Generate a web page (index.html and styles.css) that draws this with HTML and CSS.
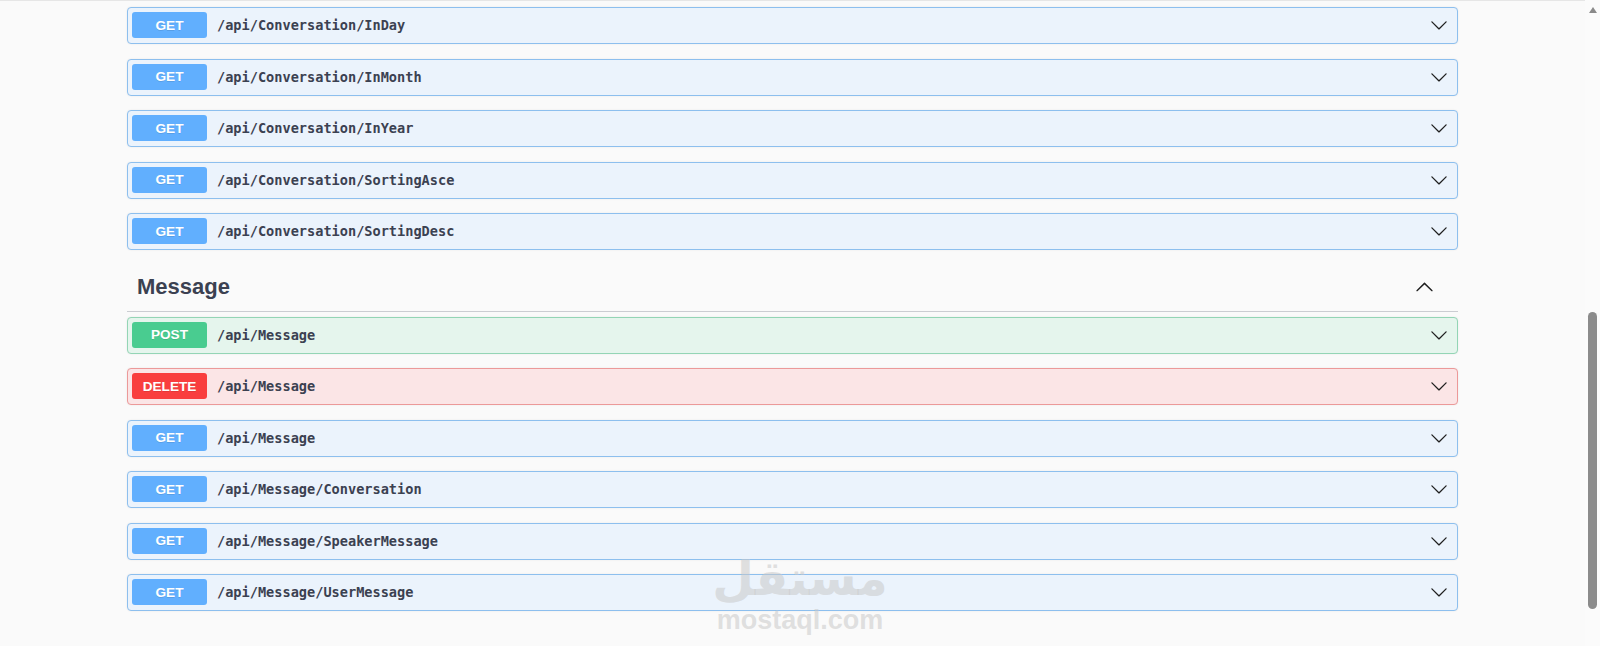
FILE: index.html
```html
<!DOCTYPE html>
<html lang="en">
<head>
    <meta charset="UTF-8">
    <meta name="viewport" content="width=device-width, initial-scale=1.0">
    <title>Swagger UI</title>
    <link rel="stylesheet" href="styles.css">
</head>
<body>
    <main class="page">
        <section class="tag-section">
            <div class="opblock get">
                <span class="method">GET</span>
                <span class="path">/api/Conversation/InDay</span>
                <svg class="arrow" viewBox="0 0 20 20"><path d="M17.418 6.109c.272-.268.709-.268.979 0s.271.701 0 .969l-7.908 7.83c-.27.268-.707.268-.979 0l-7.908-7.83c-.27-.268-.27-.701 0-.969.271-.268.709-.268.979 0L10 13.25l7.418-7.141z"/></svg>
            </div>
            <div class="opblock get">
                <span class="method">GET</span>
                <span class="path">/api/Conversation/InMonth</span>
                <svg class="arrow" viewBox="0 0 20 20"><path d="M17.418 6.109c.272-.268.709-.268.979 0s.271.701 0 .969l-7.908 7.83c-.27.268-.707.268-.979 0l-7.908-7.83c-.27-.268-.27-.701 0-.969.271-.268.709-.268.979 0L10 13.25l7.418-7.141z"/></svg>
            </div>
            <div class="opblock get">
                <span class="method">GET</span>
                <span class="path">/api/Conversation/InYear</span>
                <svg class="arrow" viewBox="0 0 20 20"><path d="M17.418 6.109c.272-.268.709-.268.979 0s.271.701 0 .969l-7.908 7.83c-.27.268-.707.268-.979 0l-7.908-7.83c-.27-.268-.27-.701 0-.969.271-.268.709-.268.979 0L10 13.25l7.418-7.141z"/></svg>
            </div>
            <div class="opblock get">
                <span class="method">GET</span>
                <span class="path">/api/Conversation/SortingAsce</span>
                <svg class="arrow" viewBox="0 0 20 20"><path d="M17.418 6.109c.272-.268.709-.268.979 0s.271.701 0 .969l-7.908 7.83c-.27.268-.707.268-.979 0l-7.908-7.83c-.27-.268-.27-.701 0-.969.271-.268.709-.268.979 0L10 13.25l7.418-7.141z"/></svg>
            </div>
            <div class="opblock get">
                <span class="method">GET</span>
                <span class="path">/api/Conversation/SortingDesc</span>
                <svg class="arrow" viewBox="0 0 20 20"><path d="M17.418 6.109c.272-.268.709-.268.979 0s.271.701 0 .969l-7.908 7.83c-.27.268-.707.268-.979 0l-7.908-7.83c-.27-.268-.27-.701 0-.969.271-.268.709-.268.979 0L10 13.25l7.418-7.141z"/></svg>
            </div>
        </section>

        <section class="tag-section">
            <h3 class="tag-title">
                <span>Message</span>
                <svg class="arrow-up" viewBox="0 0 20 20"><path d="M17.418 14.908c.272.268.709.268.979 0s.271-.701 0-.969l-7.908-7.83c-.27-.268-.707-.268-.979 0l-7.908 7.83c-.27.268-.27.701 0 .969.271.268.709.268.979 0L10 7.767l7.418 7.141z"/></svg>
            </h3>
            <div class="opblock post">
                <span class="method">POST</span>
                <span class="path">/api/Message</span>
                <svg class="arrow" viewBox="0 0 20 20"><path d="M17.418 6.109c.272-.268.709-.268.979 0s.271.701 0 .969l-7.908 7.83c-.27.268-.707.268-.979 0l-7.908-7.83c-.27-.268-.27-.701 0-.969.271-.268.709-.268.979 0L10 13.25l7.418-7.141z"/></svg>
            </div>
            <div class="opblock delete">
                <span class="method">DELETE</span>
                <span class="path">/api/Message</span>
                <svg class="arrow" viewBox="0 0 20 20"><path d="M17.418 6.109c.272-.268.709-.268.979 0s.271.701 0 .969l-7.908 7.83c-.27.268-.707.268-.979 0l-7.908-7.83c-.27-.268-.27-.701 0-.969.271-.268.709-.268.979 0L10 13.25l7.418-7.141z"/></svg>
            </div>
            <div class="opblock get">
                <span class="method">GET</span>
                <span class="path">/api/Message</span>
                <svg class="arrow" viewBox="0 0 20 20"><path d="M17.418 6.109c.272-.268.709-.268.979 0s.271.701 0 .969l-7.908 7.83c-.27.268-.707.268-.979 0l-7.908-7.83c-.27-.268-.27-.701 0-.969.271-.268.709-.268.979 0L10 13.25l7.418-7.141z"/></svg>
            </div>
            <div class="opblock get">
                <span class="method">GET</span>
                <span class="path">/api/Message/Conversation</span>
                <svg class="arrow" viewBox="0 0 20 20"><path d="M17.418 6.109c.272-.268.709-.268.979 0s.271.701 0 .969l-7.908 7.83c-.27.268-.707.268-.979 0l-7.908-7.83c-.27-.268-.27-.701 0-.969.271-.268.709-.268.979 0L10 13.25l7.418-7.141z"/></svg>
            </div>
            <div class="opblock get">
                <span class="method">GET</span>
                <span class="path">/api/Message/SpeakerMessage</span>
                <svg class="arrow" viewBox="0 0 20 20"><path d="M17.418 6.109c.272-.268.709-.268.979 0s.271.701 0 .969l-7.908 7.83c-.27.268-.707.268-.979 0l-7.908-7.83c-.27-.268-.27-.701 0-.969.271-.268.709-.268.979 0L10 13.25l7.418-7.141z"/></svg>
            </div>
            <div class="opblock get">
                <span class="method">GET</span>
                <span class="path">/api/Message/UserMessage</span>
                <svg class="arrow" viewBox="0 0 20 20"><path d="M17.418 6.109c.272-.268.709-.268.979 0s.271.701 0 .969l-7.908 7.83c-.27.268-.707.268-.979 0l-7.908-7.83c-.27-.268-.27-.701 0-.969.271-.268.709-.268.979 0L10 13.25l7.418-7.141z"/></svg>
            </div>
        </section>

        <div class="watermark">
            <span class="wm-ar">مستقل</span>
            <span class="wm-en">mostaql.com</span>
        </div>
    </main>

    <aside class="scrollbar">
        <span class="scroll-up"></span>
        <span class="scroll-thumb"></span>
    </aside>
</body>
</html>
```

FILE: styles.css
```css
body {
    margin: 0;
    height: 646px;
    overflow: hidden;
    display: flex;
    background-color: #fafafa;
    font-family: "Liberation Sans", Arial, sans-serif;
    color: #3b4151;
}

.page {
    position: relative;
    flex: 1;
    border-top: 1px solid #e6e6e6;
    padding: 6px 0 0 127px;
}

.tag-section {
    width: 1331px;
}

.opblock {
    height: 37px;
    box-sizing: border-box;
    margin-bottom: 14.5px;
    padding: 0 9px 1px 4px;
    display: flex;
    align-items: center;
    border: 1px solid #8dbfee;
    border-radius: 4px;
    background-color: #ebf3fc;
    box-shadow: 0 0 2px rgba(0, 0, 0, 0.08);
}

.opblock.post {
    border-color: #93d5b5;
    background-color: #e5f5ed;
}

.opblock.delete {
    border-color: #ec9999;
    background-color: #fbe5e6;
}

.method {
    width: 75px;
    height: 26px;
    display: flex;
    align-items: center;
    justify-content: center;
    border-radius: 3px;
    font-size: 13.6px;
    font-weight: 700;
    color: #fff;
    background-color: #61affe;
    text-shadow: 0 1px 0 rgba(0, 0, 0, 0.1);
}

.post .method {
    background-color: #49cc90;
}

.delete .method {
    background-color: #f93e3e;
}

.path {
    flex: 1;
    padding-left: 10px;
    font-family: "DejaVu Sans Mono", "Liberation Mono", monospace;
    font-size: 13.6px;
    font-weight: 700;
    color: #3b4151;
}

.arrow {
    width: 18px;
    height: 18px;
    fill: #1f1f1f;
}

.tag-title {
    height: 46px;
    margin: 0 0 5px;
    padding: 0 24px 2px 10px;
    box-sizing: border-box;
    height: 47px;
    display: flex;
    align-items: center;
    justify-content: space-between;
    border-bottom: 1px solid #cbcdd2;
    font-size: 22px;
    font-weight: 700;
    color: #3b4151;
}

.arrow-up {
    width: 19px;
    height: 19px;
    fill: #1f1f1f;
}

.watermark {
    position: absolute;
    left: 700px;
    top: 550px;
    width: 200px;
    display: flex;
    flex-direction: column;
    align-items: center;
    color: rgba(200, 200, 200, 0.55);
    font-weight: 700;
    pointer-events: none;
}

.wm-ar {
    font-family: "DejaVu Sans", sans-serif;
    font-size: 48px;
    line-height: 54px;
}

.wm-en {
    font-family: "Liberation Sans", Arial, sans-serif;
    font-size: 27px;
    line-height: 30px;
}

.scrollbar {
    width: 15px;
    display: flex;
    flex-direction: column;
    align-items: center;
    background-color: #fbfbfb;
}

.scroll-up {
    margin-top: 7px;
    width: 0;
    height: 0;
    border-left: 4.5px solid transparent;
    border-right: 4.5px solid transparent;
    border-bottom: 6px solid #8a8a8a;
}

.scroll-thumb {
    margin-top: 299px;
    width: 9px;
    height: 297px;
    border-radius: 5px;
    background-color: #8b8b8b;
}
```
